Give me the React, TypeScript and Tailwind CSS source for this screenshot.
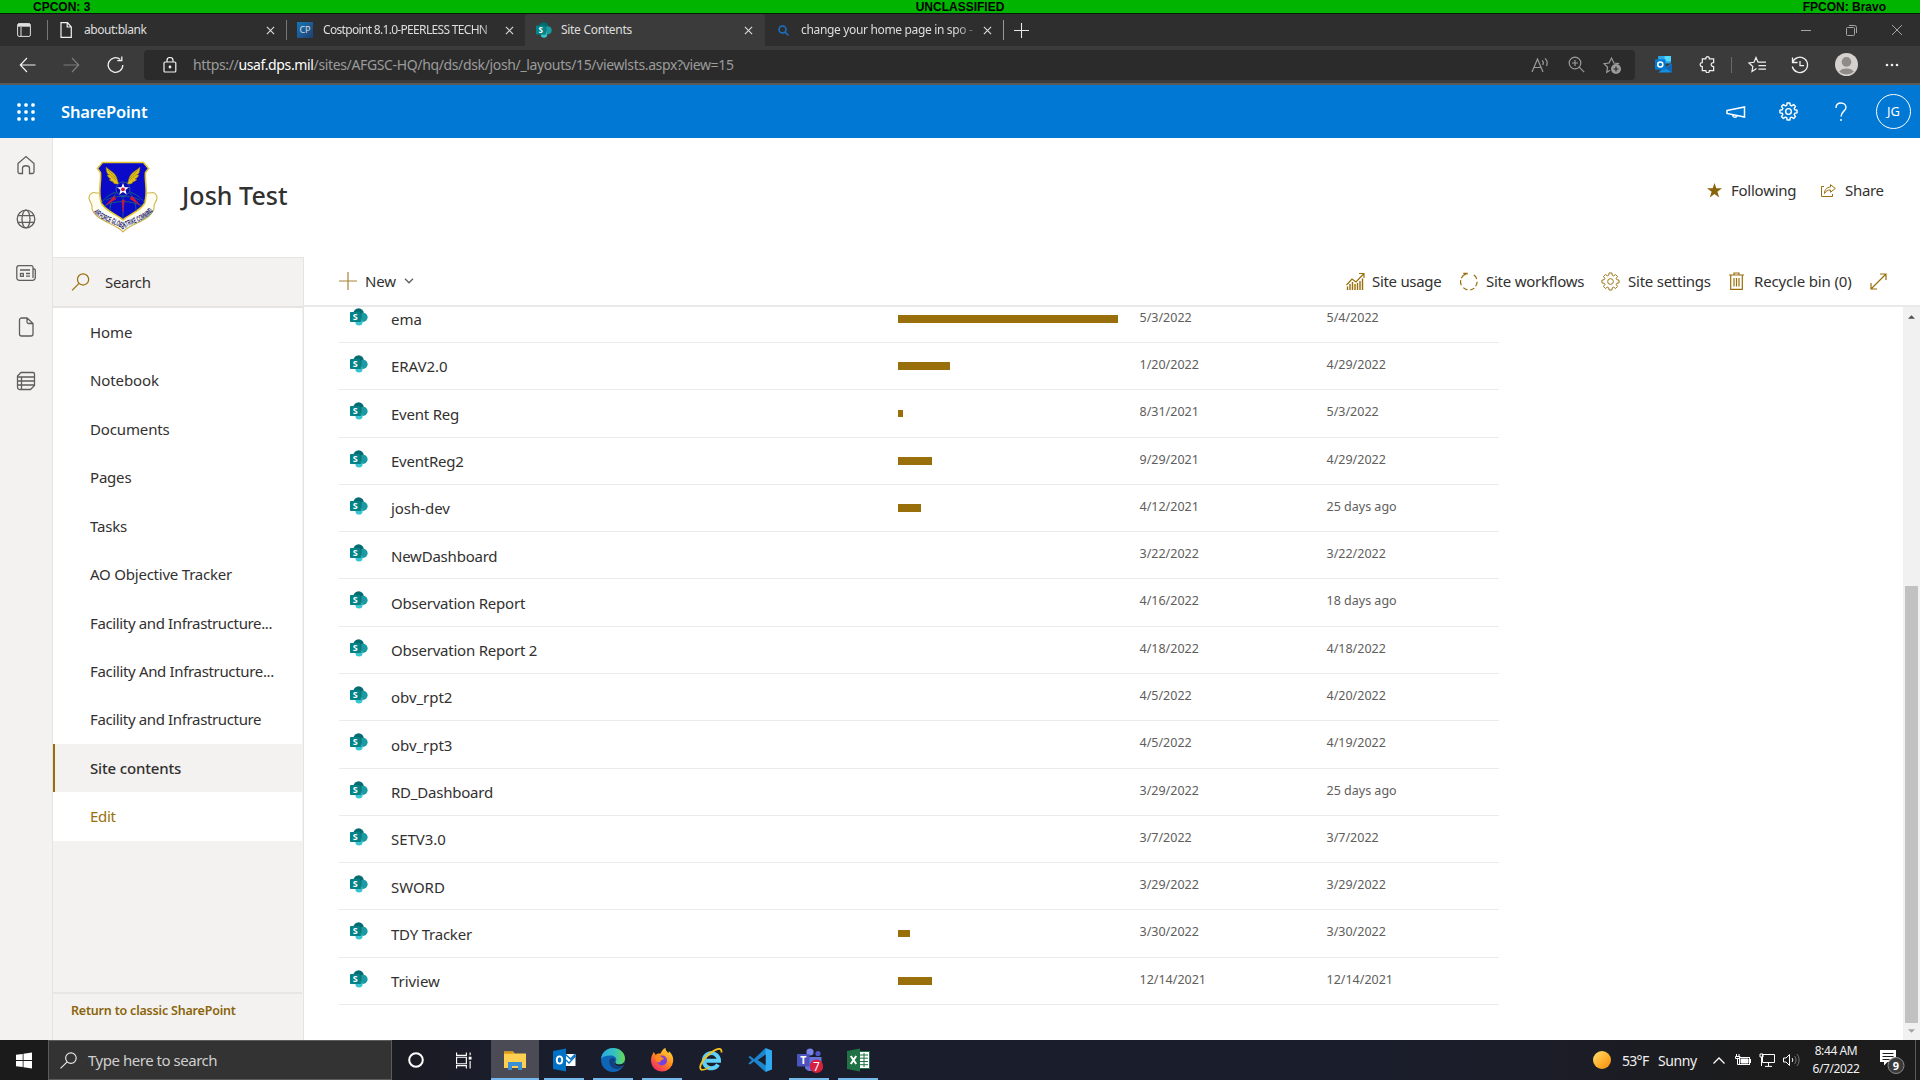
import React from "react";

type P = { className?: string };

const rows = [
  { name: "ema", bar: 220, created: "5/3/2022", modified: "5/4/2022" },
  { name: "ERAV2.0", bar: 52, created: "1/20/2022", modified: "4/29/2022" },
  { name: "Event Reg", bar: 5, created: "8/31/2021", modified: "5/3/2022" },
  { name: "EventReg2", bar: 34, created: "9/29/2021", modified: "4/29/2022" },
  { name: "josh-dev", bar: 23, created: "4/12/2021", modified: "25 days ago" },
  { name: "NewDashboard", bar: 0, created: "3/22/2022", modified: "3/22/2022" },
  { name: "Observation Report", bar: 0, created: "4/16/2022", modified: "18 days ago" },
  { name: "Observation Report 2", bar: 0, created: "4/18/2022", modified: "4/18/2022" },
  { name: "obv_rpt2", bar: 0, created: "4/5/2022", modified: "4/20/2022" },
  { name: "obv_rpt3", bar: 0, created: "4/5/2022", modified: "4/19/2022" },
  { name: "RD_Dashboard", bar: 0, created: "3/29/2022", modified: "25 days ago" },
  { name: "SETV3.0", bar: 0, created: "3/7/2022", modified: "3/7/2022" },
  { name: "SWORD", bar: 0, created: "3/29/2022", modified: "3/29/2022" },
  { name: "TDY Tracker", bar: 12, created: "3/30/2022", modified: "3/30/2022" },
  { name: "Triview", bar: 34, created: "12/14/2021", modified: "12/14/2021" },
];

const nav = [
  { label: "Home", tracking: "tracking-[-0.1px]" },
  { label: "Notebook", tracking: "tracking-[-0.1px]" },
  { label: "Documents", tracking: "tracking-[-0.14px]" },
  { label: "Pages", tracking: "tracking-[-0.2px]" },
  { label: "Tasks", tracking: "tracking-[-0.2px]" },
  { label: "AO Objective Tracker", tracking: "tracking-[-0.22px]" },
  { label: "Facility and Infrastructure...", tracking: "tracking-[-0.36px]" },
  { label: "Facility And Infrastructure...", tracking: "tracking-[-0.34px]" },
  { label: "Facility and Infrastructure", tracking: "tracking-[-0.36px]" },
];

function SpIcon({ className }: P) {
  return (
    <svg viewBox="0 0 18 18" className={className}>
      <circle cx="8.6" cy="5.4" r="5.2" fill="#036c70" />
      <circle cx="13" cy="9.3" r="4.6" fill="#1a9ba1" />
      <circle cx="9" cy="14" r="3.6" fill="#37c6d0" />
      <path d="M4 4h7.5v10H5.4A4 4 0 0 1 4 11z" fill="#03585c" opacity=".55" />
      <rect x="0" y="4" width="10.4" height="10" rx=".8" fill="#038387" />
      <text x="5.2" y="12.2" textAnchor="middle" fontSize="9" fontWeight="700" fill="#fff" fontFamily="Noto Sans">S</text>
    </svg>
  );
}

function Close({ className = "text-[#d8d8d8]" }: P) {
  return (
    <svg viewBox="0 0 10 10" className={"h-[9px] w-[9px] shrink-0 " + className} stroke="currentColor" strokeWidth="1.3" fill="none">
      <path d="M1 1l8 8M9 1l-8 8" />
    </svg>
  );
}

function Gear({ className }: P) {
  return (
    <svg viewBox="0 0 20 20" className={className} fill="none" stroke="currentColor" strokeLinejoin="round">
      <path d="M8.6 1h2.8l.5 2.4 1.4.6 2.1-1.3 2 2-1.4 2.1.6 1.3 2.4.5v2.8l-2.4.5-.6 1.3 1.4 2.1-2 2-2.1-1.3-1.4.6-.5 2.4H8.6l-.5-2.4-1.4-.6-2.1 1.3-2-2L4 13.200l-.6-1.300L1 11.400V8.600l2.400-.5L4 6.800 2.600 4.700l2-2L6.700 4l1.400-.6z" />
      <circle cx="10" cy="10" r="3" />
    </svg>
  );
}

function Magnifier({ className }: P) {
  return (
    <svg viewBox="0 0 19 19" className={className} fill="none" stroke="currentColor" strokeWidth="1.3">
      <circle cx="12.200" cy="6.800" r="5.900" />
      <path d="M8 11L.6 18.400" />
    </svg>
  );
}

function OutlookSmall({ className }: P) {
  return (
    <svg viewBox="0 0 16 16" className={className}>
      <path d="M3 0h12v7H3z" fill="#28a8ea" />
      <path d="M9 0h6v5H9z" fill="#50d9ff" />
      <path d="M3 5h6v5H3z" fill="#0364b8" />
      <path d="M3 15.500h12.500V7L9 11z" fill="#1490df" />
      <path d="M16 7.500v8L9.500 11.400z" fill="#1066b5" />
      <rect x="0" y="3" width="10" height="10" rx=".8" fill="#0078d4" />
      <circle cx="5" cy="8" r="2.400" fill="none" stroke="#fff" strokeWidth="1.400" />
    </svg>
  );
}

function Shield() {
  return (
    <svg viewBox="0 0 70 72" className="h-[72px] w-[70px] shrink-0">
      <path d="M8 32c-5-2-8 3-6.500 7 1 3 3 4 2.500 8-.3 3 2 5 5 8 8 7 20 9 26 16 6-7 18-9 26-16 3-3 5.300-5 5-8-.5-4 1.500-5 2.500-8 1.500-4-1.500-9-6.500-7z" fill="#fffdf0" stroke="#cdb54a" strokeWidth="1.100" />
      <path d="M14.500 1.500h41l5 6-3 4c-1 10 3 20-1 31C51 51 40 54 35 59 30 54 19 51 13.500 42.500c-4-11 0-21-1-31l-3-4z" fill="#0a0ac8" stroke="#e3c52c" strokeWidth="1.600" />
      <path d="M35 29C24 31 16 37 13.500 42M35 29c11 2 19 8 21.500 13M18 39c10-5 24-5 34 0M16 45c12-6 26-6 38 0M35 29v28M28 32c-5 7-6 13-6 18M42 32c5 7 6 13 6 18" stroke="#1c6f6a" strokeWidth=".8" fill="none" />
      <path d="M26 35l-8 9 10-6zM44 35l8 9-10-6zM34 39l1 12 1.500-12z" fill="#d01838" stroke="#d01838" strokeWidth=".4" />
      <g fill="#e2c01c" stroke="#7f6a10" strokeWidth=".5">
        <path d="M32 23c-3-1-2-5-4-8-2-4-6-5-10-9 0 4 1 7 3 8l-2 0c1 2 2 3 4 4l-2 .500c2 2 3 2 4.500 2.500-1 1 1 2.500 6.500 2z" />
        <path d="M38 23c3-1 2-5 4-8 2-4 6-5 10-9 0 4-1 7-3 8l2 0c-1 2-2 3-4 4l2 .500c-2 2-3 2-4.500 2.500 1 1-1 2.500-6.500 2z" />
        <path d="M20 9l9 9M21 13l7 6M50 9l-9 9M49 13l-7 6" fill="none" />
      </g>
      <circle cx="35" cy="28" r="7" fill="#0a0ab8" stroke="#2c6d92" strokeWidth=".8" />
      <path d="M35 22l1.600 4.200 4.400.100-3.500 2.800 1.200 4.300L35 31l-3.700 2.400 1.200-4.300L29 26.300l4.400-.100z" fill="#fff" />
      <circle cx="35" cy="28.300" r="1.900" fill="#d01838" />
      <path id="scroll" d="M5 50C12 61 27 61.500 35 68.500 43 61.500 58 61 65 50" fill="none" />
      <text fontSize="8" fontWeight="700" fill="#1c1c70" fontFamily="Liberation Sans">
        <textPath href="#scroll" startOffset="1" textLength="71" lengthAdjust="spacingAndGlyphs">AIR FORCE GLOBAL STRIKE COMMAND</textPath>
      </text>
    </svg>
  );
}

function TabStrip() {
  return (
    <div className="flex h-[32px] items-center bg-[#2e2e2e] text-[12px] tracking-[-0.3px] text-[#dedede]">
      <svg viewBox="0 0 14 14" className="ml-[17px] h-[14px] w-[14px] text-[#e0e0e0]" fill="none" stroke="currentColor">
        <rect x=".6" y=".6" width="12.800" height="12.800" rx="1.500" />
        <path d="M1 2.200h12" strokeWidth="3" />
        <path d="M4 4v9" />
      </svg>
      <span className="ml-[16px] h-[20px] w-px bg-[#777]" />
      <div className="flex w-[238px] items-center">
        <svg viewBox="0 0 12 16" className="ml-[12px] h-[16px] w-[12px]" fill="none" stroke="#f0f0f0" strokeWidth="1.200">
          <path d="M1 .7h6.500L11.300 5v10.300H1zM7.200.7V5h4" />
        </svg>
        <span className="ml-[12px] w-[182px] tracking-[-0.45px]">about:blank</span>
        <Close />
      </div>
      <span className="h-[20px] w-px bg-[#777]" />
      <div className="flex w-[238px] items-center">
        <span className="ml-[10px] flex h-[16px] w-[16px] shrink-0 items-center justify-center bg-gradient-to-br from-[#1277b8] to-[#1d4072] text-[9px] tracking-normal">CP</span>
        <span className="ml-[10px] w-[176px] whitespace-nowrap tracking-[-0.68px] [mask-image:linear-gradient(to_right,#000_88%,#0003)]">Costpoint 8.1.0-PEERLESS TECHN</span>
        <Close className="ml-[6px] text-[#d8d8d8]" />
      </div>
      <div className="flex h-full w-[240px] items-center rounded-t-[4px] bg-[#3b3b3b]">
        <SpIcon className="ml-[11px] h-[16px] w-[16px]" />
        <span className="ml-[9px] w-[183px]">Site Contents</span>
        <Close />
      </div>
      <div className="flex w-[238px] items-center">
        <svg viewBox="0 0 11 11" className="ml-[13px] h-[11px] w-[11px]" fill="none" stroke="#1a73c9" strokeWidth="1.500">
          <circle cx="4.500" cy="4.500" r="3.500" />
          <path d="M7 7l3.500 3.500" />
        </svg>
        <span className="ml-[12px] w-[175px] whitespace-nowrap tracking-[-0.34px] [mask-image:linear-gradient(to_right,#000_88%,#0003)]">change your home page in spo -</span>
        <Close className="ml-[7px] text-[#d8d8d8]" />
      </div>
      <span className="h-[20px] w-px bg-[#999]" />
      <svg viewBox="0 0 14 14" className="ml-[10px] h-[15px] w-[15px]" stroke="#e8e8e8" fill="none">
        <path d="M7 0v14M0 7h14" />
      </svg>
      <div className="ml-auto mr-[18px] flex items-center gap-[35px] text-[#a5a5a5]">
        <span className="h-px w-[10px] bg-[#a5a5a5]" />
        <svg viewBox="0 0 11 11" className="h-[11px] w-[11px]" fill="none" stroke="currentColor">
          <rect x=".5" y="2.500" width="8" height="8" rx="1" />
          <path d="M3 .5h5.500a2 2 0 0 1 2 2V8" />
        </svg>
        <svg viewBox="0 0 10 10" className="h-[10px] w-[10px]" stroke="currentColor"><path d="M0 0l10 10M10 0L0 10" /></svg>
      </div>
    </div>
  );
}

function Toolbar() {
  return (
    <div className="flex h-[39px] items-center border-b-2 border-[#5e5a57] bg-[#3b3b3b]">
      <svg viewBox="0 0 16 16" className="ml-[19px] h-[16px] w-[17px]" fill="none" stroke="#f2f2f2" strokeWidth="1.200"><path d="M16 8H.8M7.500 1L.8 8l6.700 7" /></svg>
      <svg viewBox="0 0 16 16" className="ml-[27px] h-[16px] w-[17px]" fill="none" stroke="#7c7c7c" strokeWidth="1.200"><path d="M0 8h15.200M8.500 1l6.700 7-6.700 7" /></svg>
      <svg viewBox="0 0 17 18" className="ml-[27px] h-[18px] w-[17px]" fill="none" stroke="#f2f2f2" strokeWidth="1.300"><path d="M15.800 9a7.300 7.300 0 1 1-2.500-5.500M14.800.5v4.200h-4.500" /></svg>
      <div className="ml-[20px] flex h-[30px] w-[1491px] shrink-0 items-center rounded-[4px] bg-[#2b2b2b] text-[#9b9b9b]">
        <svg viewBox="0 0 14 16" className="ml-[19px] h-[16px] w-[14px]" fill="none" stroke="#f2f2f2" strokeWidth="1.200">
          <rect x="1" y="5" width="11.800" height="10" rx="1" />
          <path d="M4 5V3.500a3 3 0 0 1 6 0V5" /><circle cx="7" cy="10" r=".8" fill="#fff" />
        </svg>
        <span className="ml-[16px] whitespace-nowrap text-[14px] tracking-[-0.36px]">https://<span className="text-white">usaf.dps.mil</span>/sites/AFGSC-HQ/hq/ds/dsk/josh/_layouts/15/viewlsts.aspx?view=15</span>
        <div className="ml-auto mr-[14px] flex items-center gap-[18px]">
          <svg viewBox="0 0 19 16" className="h-[16px] w-[19px]" fill="none" stroke="currentColor" strokeWidth="1.200"><path d="M1 15L6.500 2 12 15M3 10.500h7M11 3.500c1.500 1 1.500 3 .8 4.500M14 1.500c2.500 2 2.500 5 1.500 7.500" /></svg>
          <svg viewBox="0 0 17 17" className="h-[17px] w-[17px]" fill="none" stroke="currentColor" strokeWidth="1.200"><circle cx="7" cy="7" r="5.800" /><path d="M11.200 11.200l5 5M7 4v6M4 7h6" /></svg>
          <svg viewBox="0 0 18 18" className="h-[18px] w-[18px]" fill="none" stroke="currentColor" strokeWidth="1.200"><path d="M7 14.200l-3.300 2 .9-5L1 7.700l5-.7L8.500 2l2.400 5 5.300.700" /><circle cx="13" cy="13" r="5" fill="currentColor" stroke="none" /><path d="M13 10.500v5M10.500 13h5" stroke="#2b2b2b" /></svg>
        </div>
      </div>
      <OutlookSmall className="ml-[20px] h-[17px] w-[17px]" />
      <svg viewBox="0 0 18 18" className="ml-[27px] h-[17px] w-[17px]" fill="none" stroke="#f0f0f0" strokeWidth="1.300"><path d="M3.500 3h3.700c-.2-3 4-3 3.800 0h4.500v4c-3.500-.3-3.500 4.500 0 4.200V15.500h-4.500c.2 3-4 3-3.800 0H3.500v-4.300c-3 .2-3-4.400 0-4.200z" /></svg>
      <span className="ml-[15px] h-[16px] w-px bg-[#6a6a6a]" />
      <svg viewBox="0 0 18 17" className="ml-[16px] h-[17px] w-[18px]" fill="none" stroke="#f0f0f0" strokeWidth="1.200"><path d="M8.500 12.500L4 15.500l.8-5L1 7l5-.7L8 1.500l2 4.700h2.500M11.500 6.200H18M10.500 9.700H18M10.500 13.200H18" /></svg>
      <svg viewBox="0 0 18 18" className="ml-[25px] h-[18px] w-[18px]" fill="none" stroke="#f0f0f0" strokeWidth="1.300"><path d="M1.500 6.500A7.700 7.700 0 1 1 1.300 10.500M1.500 1.500v5h5M9 5v4.700h4" /></svg>
      <svg viewBox="0 0 22 22" className="ml-[26px] h-[23px] w-[23px]"><circle cx="11" cy="11" r="11" fill="#d4d1ce" /><circle cx="11" cy="8.500" r="4.600" fill="#8f8b87" /><path d="M4 18a7.500 5 0 0 1 14 0 11 11 0 0 1-14 0z" fill="#8f8b87" /></svg>
      <svg viewBox="0 0 14 4" className="ml-[27px] h-[4px] w-[14px]" fill="#f0f0f0"><circle cx="2" cy="2" r="1.300" /><circle cx="7" cy="2" r="1.300" /><circle cx="12" cy="2" r="1.300" /></svg>
    </div>
  );
}

function SuiteBar() {
  return (
    <div className="flex h-[53px] items-center bg-[#0078d4] text-white">
      <svg viewBox="0 0 18 18" className="ml-[17px] h-[18px] w-[18px]" fill="#fff">
        {[2, 9, 16].map((x) => [2, 9, 16].map((y) => <rect key={x + "-" + y} x={x - 1.700} y={y - 1.700} width="3.400" height="3.400" rx="1.200" />))}
      </svg>
      <span className="ml-[26px] pt-px text-[16.5px] font-semibold tracking-[-0.15px]">SharePoint</span>
      <svg viewBox="0 0 20 14" className="ml-auto h-[14px] w-[20px]" fill="none" stroke="#fff" strokeWidth="1.500"><path d="M1 5.500L18.500 2v10L1 8.500zM6.500 10c.5 3 4 3 4.500.5" /></svg>
      <Gear className="ml-[33px] h-[19px] w-[19px] stroke-[1.500px]" />
      <svg viewBox="0 0 12 20" className="ml-[37px] h-[20px] w-[12px]" fill="none" stroke="#fff" strokeWidth="1.400"><path d="M1 6C1 2.500 3 1 6 1c3 0 5 2 5 4.500C11 9 6 9.500 6 14.500M6 17v2" /></svg>
      <span className="ml-[29px] mr-[9px] flex h-[35px] w-[35px] items-center justify-center rounded-full border border-white pt-px text-[13px]">JG</span>
    </div>
  );
}

function Rail() {
  const c = "h-[20px] w-[20px]";
  return (
    <div className="flex w-[53px] shrink-0 flex-col items-center gap-[34px] border-r border-[#e6e4e2] bg-[#f3f2f1] pt-[17px] text-[#605e5c]">
      <svg viewBox="0 0 20 20" className={c} fill="none" stroke="currentColor" strokeWidth="1.300"><path d="M2 8.500L10 1.500l8 7V17a1.500 1.500 0 0 1-1.500 1.500h-3V13c0-3-7-3-7 0v5.500h-3A1.500 1.500 0 0 1 2 17z" /></svg>
      <svg viewBox="0 0 20 20" className={c} fill="none" stroke="currentColor" strokeWidth="1.300"><circle cx="10" cy="10" r="8.800" /><ellipse cx="10" cy="10" rx="4" ry="8.800" /><path d="M2 6.700h16M2 13.300h16" /></svg>
      <svg viewBox="0 0 20 20" className={c} fill="none" stroke="currentColor" strokeWidth="1.300"><path d="M3 2.700h12.500a1.500 1.500 0 0 1 1.500 1.500V15M17 6h1a1.300 1.300 0 0 1 1.300 1.300V14.500a2.800 2.800 0 0 1-2.800 2.800H3.500A2.500 2.500 0 0 1 .8 15V5A2.300 2.300 0 0 1 3 2.700M4 7h10M10 10.500h4M10 13.200h4" /><rect x="4.500" y="10.500" width="2.800" height="2.800" /></svg>
      <svg viewBox="0 0 20 20" className={c} fill="none" stroke="currentColor" strokeWidth="1.300"><path d="M5.500 1H11l6 5.500V17a2 2 0 0 1-2 2H5.500a2 2 0 0 1-2-2V3a2 2 0 0 1 2-2M11 1v4a1.500 1.500 0 0 0 1.500 1.500H17" /></svg>
      <svg viewBox="0 0 20 20" className={c} fill="none" stroke="currentColor" strokeWidth="1.300"><path d="M5 1.500h12A1.500 1.500 0 0 1 18.500 3v11.500l-4 4H4.500A2.500 2.500 0 0 1 1.500 16V5zM1.500 6h17M1.500 10h17M1.500 14h17M5.500 6v12.500" /></svg>
    </div>
  );
}

function SideNav() {
  return (
    <div className="flex w-[251px] shrink-0 flex-col border-r border-[#e6e4e2] bg-[#f3f2f1] text-[15px] text-[#323130]">
      <div className="flex h-[51px] items-center border-t border-b-2 border-[#e6e4e2] bg-[#f3f2f1]">
        <Magnifier className="ml-[18px] h-[18px] w-[19px] text-[#986f0b]" />
        <span className="ml-[15px] tracking-[-0.3px]">Search</span>
      </div>
      <div className="mr-px flex flex-col bg-white">
        {nav.map((n) => (
          <div key={n.label} className={"flex h-[48.45px] items-center whitespace-nowrap pl-[37px] " + n.tracking}>{n.label}</div>
        ))}
        <div className="flex h-[48.45px] items-center border-l-2 border-[#986f0b] bg-[#f3f2f1] pl-[35px] font-medium tracking-[-0.16px]">Site contents</div>
        <div className="flex h-[48.45px] items-center pl-[37px] tracking-[-0.3px] text-[#986f0b]">Edit</div>
      </div>
      <div className="mr-px mt-auto h-[48px] border-t-2 border-[#e8e6e4] pl-[18px] pt-[8px] text-[12.5px] font-semibold leading-[18px] tracking-[-0.2px] text-[#8a640a]">Return to classic SharePoint</div>
    </div>
  );
}

function CommandBar() {
  return (
    <div className="flex h-[50px] shrink-0 items-center border-b-2 border-[#e9e9e9] text-[15px] text-[#323130]">
      <svg viewBox="0 0 18 18" className="ml-[35px] h-[18px] w-[18px]" stroke="#a8833a" fill="none" strokeWidth="1.200"><path d="M9 0v18M0 9h18" /></svg>
      <span className="ml-[8px] tracking-[-0.1px]">New</span>
      <svg viewBox="0 0 10 6" className="ml-[8px] h-[6px] w-[10px]" fill="none" stroke="#605e5c" strokeWidth="1.300"><path d="M1 .8l4 4 4-4" /></svg>
      <div className="ml-auto mr-[33px] flex items-center whitespace-nowrap text-[#323130]">
        <svg viewBox="0 0 19 18" className="mr-[7px] h-[18px] w-[19px]" fill="none" stroke="#986f0b"><path d="M.5 13L6 7l4 3L17.500 2M13 1.500h5V6" strokeWidth="1.200" /><path d="M1.500 14.500V18M4 12v6M6.500 10v8M9 12v6M11.500 11v7M14 9v9M16.500 6.500V18" strokeWidth="1.400" /></svg>
        <span className="w-[70px] tracking-[-0.3px]">Site usage</span>
        <svg viewBox="0 0 20 20" className="ml-[17px] mr-[7px] h-[19px] w-[20px]" fill="none" stroke="#986f0b" strokeWidth="1.300"><path d="M7 2a8.500 8.500 0 0 0-5 12" strokeDasharray="7 2" /><path d="M4 1.500h4v4M4 16.500c3 3 8 3.500 11.500.5M17 15a8.500 8.500 0 0 0-3-12.500" strokeDasharray="5 3" /></svg>
        <span className="w-[98px] tracking-[-0.25px]">Site workflows</span>
        <Gear className="ml-[17px] mr-[8px] h-[19px] w-[19px] text-[#986f0b]" />
        <span className="w-[83px] tracking-[-0.24px]">Site settings</span>
        <svg viewBox="0 0 15 18" className="ml-[18px] mr-[10px] h-[18px] w-[15px]" fill="none" stroke="#986f0b" strokeWidth="1.200"><path d="M0 3h15M5 3V1h5v2M1.700 3v14.300h11.600V3M5 6v8.500M7.500 6v8.500M10 6v8.500" /></svg>
        <span className="w-[99px] tracking-[-0.16px]">Recycle bin (0)</span>
        <svg viewBox="0 0 17 17" className="ml-[17px] h-[17px] w-[17px]" fill="none" stroke="#986f0b" strokeWidth="1.200"><path d="M1 16L16 1M10 1h6v6M1 10v6h6" /></svg>
      </div>
    </div>
  );
}

function Table() {
  return (
    <div className="flex min-h-0 flex-1 overflow-hidden">
      <div className="-mt-[11.4px] ml-[35px] w-[1160px] text-[#605e5c]">
        {rows.map((r) => (
          <div key={r.name} className="flex h-[47.3px] border-b border-[#edebe9]">
            <SpIcon className="ml-[11px] mt-[12px] h-[18px] w-[18px] shrink-0" />
            <span className={"ml-[23px] w-[507px] pt-[12.5px] text-[15px] leading-[22px] text-[#323130] " + (r.name.length > 8 ? "tracking-[-0.22px]" : "tracking-[-0.05px]")}>{r.name}</span>
            <span className="w-[241.500px] pt-[19.5px]">
              <span className="block h-[7.5px] bg-[#986f0b]" style={{ width: r.bar }} />
            </span>
            <span className="w-[187px] pt-[13px] text-[12.5px] leading-[18px]">{r.created}</span>
            <span className="pt-[13px] text-[12.5px] leading-[18px]">{r.modified}</span>
          </div>
        ))}
      </div>
      <div className="ml-auto flex w-[17px] flex-col items-center bg-[#f1f1f1]">
        <svg viewBox="0 0 8 4" className="mt-[8px] h-[4px] w-[7px] shrink-0"><path d="M0 4l4-4 4 4z" fill="#505050" /></svg>
        <div className="mt-[267px] h-[437px] w-[13px] shrink-0 bg-[#c1c1c1]" />
        <svg viewBox="0 0 8 4" className="mt-[6px] h-[4px] w-[7px] shrink-0"><path d="M0 0l4 4 4-4z" fill="#a3a3a3" /></svg>
      </div>
    </div>
  );
}

function Slot({ children, line = true, active = false }: { children: React.ReactNode; line?: boolean; active?: boolean }) {
  return (
    <div className={active ? "flex h-full w-[48px] flex-col items-center bg-[#4b4b56]" : "flex h-full w-[49px] flex-col items-center"}>
      <div className="flex h-[38px] items-center pt-[2px]">{children}</div>
      {line && <span className={active ? "h-[2px] w-[48px] bg-[#76b9ed]" : "h-[2px] w-[40px] bg-[#76b9ed]"} />}
    </div>
  );
}

function Taskbar() {
  return (
    <div className="flex h-[40px] shrink-0 items-center bg-[linear-gradient(to_right,#1b1b1b_0,#1b1b1e_18%,#1a1d2b_26%,#1a1d2b_70%,#1b1d28_80%,#1c1c1c_92%)] text-[#f0f0f0]">
      <svg viewBox="0 0 16 16" className="ml-[16px] h-[17px] w-[16px]" fill="#fff"><path d="M0 2.300l6.700-.9v6.200H0zM7.500 1.300L16 0v7.600H7.500zM0 8.400h6.700v6.200L0 13.700zM7.500 8.400H16V16l-8.500-1.300z" /></svg>
      <div className="ml-[16px] flex h-[40px] w-[344px] items-center border border-[#5c5c5c] bg-[#333]">
        <Magnifier className="ml-[11px] h-[17px] w-[17px] text-[#e8e8e8]" />
        <span className="ml-[11px] pt-px text-[15px] tracking-[-0.47px] text-[#cfcfcf]">Type here to search</span>
      </div>
      <div className="flex h-full w-[99px] items-center">
        <svg viewBox="0 0 16 16" className="ml-[16px] h-[16px] w-[16px]" fill="none" stroke="#fff" strokeWidth="2"><circle cx="8" cy="8" r="6.800" /></svg>
        <svg viewBox="0 0 17 17" className="ml-[32px] h-[17px] w-[16px]" fill="none" stroke="#fff" strokeWidth="1.200"><path d="M.6 0v3H11V0M.6 17v-3H11v3M.6 5h10.400v7H.6zM15 0v3M15 9v8" /><rect x="13.500" y="4.500" width="3" height="3" fill="#fff" stroke="none" /></svg>
      </div>
      <Slot active>
        <svg viewBox="0 0 22 19" className="h-[19px] w-[22px]"><path d="M0 .5h9l1.500 2H22V17H0z" fill="#ffcf52" /><path d="M0 .5h9l.8 2.200H0z" fill="#e09a10" /><path d="M4 11h14v8h-4v-4H8v4H4z" fill="#3b8fd6" /></svg>
      </Slot>
      <Slot>
        <svg viewBox="0 0 24 24" className="h-[24px] w-[24px]"><path d="M13 6h10.500v12H13z" fill="#fff" /><path d="M13 6l5.500 5L23.500 6M14 12l3 3 6.500-7" fill="none" stroke="#0072c6" strokeWidth="1.300" /><path d="M1 3l13-2.500v23L1 21z" fill="#0072c6" /><ellipse cx="7.500" cy="12" rx="2.700" ry="3.600" fill="none" stroke="#fff" strokeWidth="1.900" /></svg>
      </Slot>
      <Slot>
        <svg viewBox="0 0 24 24" className="h-[24px] w-[24px]">
          <defs><linearGradient id="eg" x1="0" x2="1"><stop offset="0" stopColor="#2aa9e0" /><stop offset=".55" stopColor="#35c1c0" /><stop offset="1" stopColor="#66d94f" /></linearGradient></defs>
          <circle cx="12" cy="12" r="12" fill="#0f65b8" />
          <path d="M0 11C1 4 6 0 12 0c7 0 12 5 12 10.500 0 4-3 6-6.500 6-3 0-4-1.500-3-2.500 2-2.500.5-6-4-6.500C5.500 7 1.500 8.500 0 11z" fill="url(#eg)" />
          <path d="M8.500 12c-1 5 3 9.500 8 9 2.500-.3 4.500-1.500 5.500-3-2.500 1-6.500 1-8.500-1.500-1.200-1.500-.5-2.500.5-3.500.500-2-.5-3-2-3s-3 .5-3.500 2z" fill="#133f7c" />
          <path d="M23 17c-2 1.500-6 2-8.500 0-1.500-1.300-1-2.500-.2-3.300C14 15.500 16 16.500 18 16.500c2.500 0 5-1 6-4z" fill="#1a1d2b" />
        </svg>
      </Slot>
      <Slot>
        <svg viewBox="0 0 24 24" className="h-[24px] w-[24px]">
          <defs><linearGradient id="fx" x1=".9" y1="0" x2=".2" y2="1"><stop offset="0" stopColor="#ffe23c" /><stop offset=".5" stopColor="#ff8a1c" /><stop offset="1" stopColor="#f0226c" /></linearGradient></defs>
          <path d="M1 12C1 8 3 6 3.500 4c1 1 1.500 1.500 2 3 2-2 4-1.500 5-1.500C12 2.500 13 1 15.500 0c0 3 1.500 3.500 3 5 .5 0 .5-1 0-2C22 5.500 23.500 9 23.200 13A11.200 11.200 0 0 1 12 23.500C6 23.500 1 19 1 12z" fill="url(#fx)" />
          <circle cx="12" cy="12.500" r="5" fill="#7a3fe0" />
          <path d="M5.500 8c3-1.500 6 0 6.500 1.500 2 0 2.500 1.500 1 2-2 .5-3 1.500-3 3C6 14.500 5 11 5.500 8z" fill="#ff8a1c" />
        </svg>
      </Slot>
      <Slot line={false}>
        <svg viewBox="0 0 24 24" className="h-[24px] w-[24px]" fill="none">
          <path d="M19 16.500A7.600 7.600 0 1 1 20 12.800H7" stroke="#5fd0f7" strokeWidth="4" />
          <path d="M3 22c-4-1-1-9 6-15S23-2 22.500 4.500" stroke="#f4c21f" strokeWidth="1.800" />
          <path d="M2.500 21.500c3 1 6-1 8-2.500" stroke="#f4c21f" strokeWidth="1.500" />
        </svg>
      </Slot>
      <Slot line={false}>
        <svg viewBox="0 0 24 24" className="h-[24px] w-[24px]"><path d="M17.500 0L6 11 2 8 .3 9l3.500 3.200L.3 15.500 2 16.500l4-3L17.500 24l1-8L9.500 12.300l9-6z" fill="#1b86cc" /><path d="M17.500 0L24 2.500v19L17.500 24z" fill="#2fa9f2" /><path d="M17.500 6.500v11L10.500 12z" fill="#1a1d2b" /></svg>
      </Slot>
      <Slot>
        <svg viewBox="0 0 26 25" className="ml-[2px] h-[25px] w-[26px]"><circle cx="13" cy="4" r="3.600" fill="#7b83eb" /><circle cx="21" cy="5.500" r="2.600" fill="#5059c9" /><path d="M8 9h16.500v6a5 5 0 0 1-5 5h-1a6 6 0 0 1-10.500 0z" fill="#6a72dc" /><rect x="0" y="6" width="12.500" height="12.500" rx="1" fill="#4b53bc" /><text x="6.200" y="16" textAnchor="middle" fontSize="10.500" fontWeight="700" fill="#fff" fontFamily="Noto Sans">T</text><circle cx="19.500" cy="18.300" r="6.700" fill="#d4213d" /><text x="19.500" y="22.500" textAnchor="middle" fontSize="12" fill="#fff" fontFamily="Noto Sans">7</text></svg>
      </Slot>
      <Slot>
        <svg viewBox="0 0 24 24" className="h-[24px] w-[24px]"><path d="M12 3.500h11.500v17H12z" fill="#fff" stroke="#207245" /><path d="M14 7h8M14 10.200h8M14 13.500h8M14 16.700h8M18 5v14" stroke="#207245" /><path d="M1 3l13-2.500v23L1 21z" fill="#207245" /><path d="M4.800 8l5.400 8M10.200 8l-5.400 8" stroke="#fff" strokeWidth="2" /></svg>
      </Slot>
      <div className="ml-auto flex h-full items-center">
        <span className="h-[18.5px] w-[18.5px] rounded-full bg-[linear-gradient(135deg,#ffe071,#ffb02e_55%,#f58a0c)]" />
        <span className="ml-[11px] w-[36px] pt-px text-[14px] tracking-[-0.7px]">53°F</span>
        <span className="w-[55px] pt-px text-[14px] tracking-[-0.4px]">Sunny</span>
        <svg viewBox="0 0 12 7" className="h-[7px] w-[12px]" fill="none" stroke="#fff" strokeWidth="1.300"><path d="M.5 6.500L6 1l5.500 5.500" /></svg>
        <svg viewBox="0 0 16 12" className="ml-[10px] h-[12px] w-[16px]" fill="none" stroke="#fff"><rect x="4.500" y="3.500" width="10" height="7" /><path d="M6 5h7v4H6zM15.500 5v4" fill="#fff" /><path d="M1.500 0v2M4 0v2M.5 2.500h4.500v2H.5zM2.500 5v5.500h2" /></svg>
        <svg viewBox="0 0 16 14" className="ml-[8px] h-[14px] w-[16px]" fill="none" stroke="#fff"><path d="M3.500 1.500h12v8h-12zM9.500 9.500v3.500M6 13.400h7M1 1h3v3H1zM2.500 4v9" /></svg>
        <svg viewBox="0 0 17 14" className="ml-[8px] h-[14px] w-[17px]" fill="none" stroke="#fff"><path d="M.5 5h2.500L6.500 1.500v11L3 9H.5z" /><path d="M9 5c1 1 1 3 0 4" /><path d="M11.500 3c2 2 2 6 0 8M13.800 1c3 3 3 9 0 12" stroke="#777" /></svg>
        <div className="ml-[6px] flex w-[60px] flex-col items-center whitespace-nowrap text-[12px] leading-[18px] tracking-[-0.4px]">
          <span>8:44 AM</span>
          <span>6/7/2022</span>
        </div>
        <svg viewBox="0 0 26 25" className="ml-[14px] mt-[5px] h-[25px] w-[26px]"><path d="M0 0h16v12H7.500L4 15.500V12H0z" fill="#fff" /><path d="M2.500 3.500h11M2.500 6.500h11M2.500 9.500h7" stroke="#1c1c1c" /><circle cx="16" cy="15.500" r="8" fill="#3a3a3a" stroke="#8a8a8a" /><text x="16" y="19.500" textAnchor="middle" fontSize="11" fontWeight="700" fill="#fff" fontFamily="Noto Sans">9</text></svg>
        <span className="ml-[9px] mr-[4px] h-full w-px bg-[#5a5a5a]" />
      </div>
    </div>
  );
}

export default function App() {
  return (
    <div className="flex h-[1080px] w-[1920px] flex-col overflow-hidden bg-white font-['Noto_Sans',sans-serif]">
      <div className="grid h-[14px] shrink-0 grid-cols-3 border-b border-[#0a1a0a] bg-[#00b400] font-['Liberation_Sans',sans-serif] text-[12px] font-bold leading-[14px] text-black">
        <span className="pl-[33px]">CPCON: 3</span>
        <span className="text-center">UNCLASSIFIED</span>
        <span className="pr-[34px] text-right">FPCON: Bravo</span>
      </div>
      <TabStrip />
      <Toolbar />
      <SuiteBar />
      <div className="flex min-h-0 flex-1">
        <Rail />
        <div className="flex min-w-0 flex-1 flex-col">
          <div className="flex h-[119px] shrink-0 items-start">
            <div className="ml-[35px] mt-[23px]"><Shield /></div>
            <span className="ml-[24px] mt-[39px] text-[25px] font-medium leading-[36px] tracking-[0.05px] text-[#323130]">Josh Test</span>
            <div className="ml-auto mr-[36px] mt-[40px] flex items-center text-[15px] leading-[24px] text-[#323130]">
              <svg viewBox="0 0 14 14" className="h-[15px] w-[15px]" fill="#8a640a"><path d="M7 0l1.700 5H14l-4.300 3.200L11.400 13.500 7 10.300 2.600 13.500 4.300 8.200 0 5h5.300z" /></svg>
              <span className="ml-[9px] w-[68px] tracking-[-0.25px]">Following</span>
              <svg viewBox="0 0 15 13" className="ml-[22px] h-[13px] w-[15px]" fill="none" stroke="#986f0b"><path d="M3 2.500H.5v10h11V10M9.500.7l4.800 3.800-4.800 3.700V6C6.500 6 5 7 3.500 9.500c0-4 2.500-6.300 6-6.500z" /></svg>
              <span className="ml-[9px] w-[39px] tracking-[-0.3px]">Share</span>
            </div>
          </div>
          <div className="flex min-h-0 flex-1">
            <SideNav />
            <div className="flex min-w-0 flex-1 flex-col">
              <CommandBar />
              <Table />
            </div>
          </div>
        </div>
      </div>
      <Taskbar />
    </div>
  );
}
